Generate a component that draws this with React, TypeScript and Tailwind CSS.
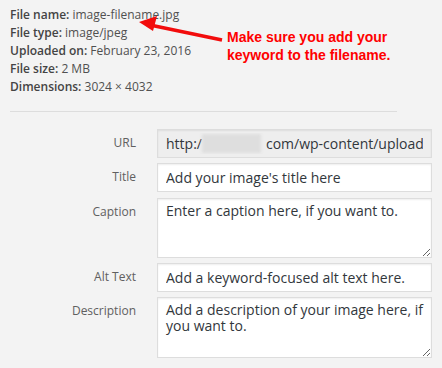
import React from "react"

const info = [
  { label: "File name:", value: "image-filename.jpg" },
  { label: "File type:", value: "image/jpeg" },
  { label: "Uploaded on:", value: "February 23, 2016" },
  { label: "File size:", value: "2 MB" },
  { label: "Dimensions:", value: "3024 × 4032" }
]

const fieldBase =
  "w-full border border-[#dddddd] px-[8px] text-[14px] text-[#32373c] shadow-[inset_0_1px_2px_rgba(0,0,0,0.07)] outline-none font-['Open_Sans',sans-serif]"

function Row({ label, children }: { label: string; children: React.ReactNode }) {
  return (
    <div className="flex pl-[10px]">
      <label className="w-[126px] shrink-0 pt-[5px] text-right text-[12px] leading-[18px] text-[#606060]">
        {label}
      </label>
      <div className="ml-[21px] w-[275px]">{children}</div>
    </div>
  )
}

export default function App() {
  return (
    <div className="relative h-[368px] w-[442px] overflow-hidden bg-[#f3f3f3] font-['Open_Sans',sans-serif]">
      <div className="flex pt-[6px] pl-[10px]">
        <div className="w-[217px] text-[12px] leading-[18px] text-[#505050]">
          {info.map((row) => (
            <div key={row.label}>
              <span className="font-semibold text-[#444444]">{row.label}</span> {row.value}
            </div>
          ))}
        </div>
        <div className="pt-[22px] font-['Liberation_Sans',Arial,sans-serif] text-[14px] leading-[18px] font-bold text-[#ff0000]">
          Make sure you add your
          <br />
          keyword to the filename.
        </div>
      </div>

      {/* annotation arrow */}
      <svg
        className="absolute top-0 left-0"
        width="442"
        height="60"
        viewBox="0 0 442 60"
      >
        <line x1="150" y1="25" x2="222" y2="40" stroke="#f20c0c" strokeWidth="3.5" />
        <polygon points="139,22 157,16 153,31" fill="#f20c0c" />
      </svg>

      <div className="mx-[10px] mt-[15px] mr-[45px] border-t border-[#dddddd]" />

      <div className="mt-[17px] flex flex-col gap-[5px]">
        <Row label="URL">
          <div className={`${fieldBase} flex h-[29px] items-center bg-[#eeeeee]`}>
            <div className="flex w-full items-center overflow-hidden whitespace-nowrap">
              <span>http:/</span>
              <span className="mr-[5px] inline-block h-[19px] w-[59px] shrink-0 bg-[#dedede] blur-[1.5px]" />
              <span>com/wp-content/upload</span>
            </div>
          </div>
        </Row>
        <Row label="Title">
          <input
            className={`${fieldBase} h-[29px] bg-white`}
            defaultValue="Add your image's title here"
          />
        </Row>
        <div className="mt-[1px]">
          <Row label="Caption">
            <textarea
              className={`${fieldBase} block h-[60px] bg-white pt-[4px] leading-[16px]`}
              defaultValue="Enter a caption here, if you want to."
            />
          </Row>
        </div>
        <Row label="Alt Text">
          <input
            className={`${fieldBase} h-[29px] bg-white`}
            defaultValue="Add a keyword-focused alt text here."
          />
        </Row>
        <Row label="Description">
          <textarea
            className={`${fieldBase} block h-[61px] bg-white pt-[4px] leading-[16px]`}
            defaultValue="Add a description of your image here, if you want to."
          />
        </Row>
      </div>
    </div>
  )
}
